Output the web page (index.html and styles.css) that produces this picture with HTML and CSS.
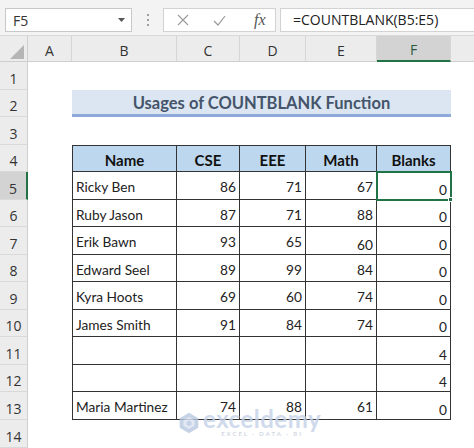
FILE: index.html
```html
<!DOCTYPE html>
<html>
<head>
<meta charset="utf-8">
<link rel="stylesheet" href="styles.css">
</head>
<body>
<div class="toolbar">
  <div class="namebox"><span>F5</span><svg class="caret" width="7" height="4" viewBox="0 0 7 4"><path d="M0 0h7L3.5 4z" fill="#555"/></svg></div>
  <div class="dots"><i></i><i></i><i></i></div>
  <div class="fxbox">
    <svg class="ic" width="12" height="12" viewBox="0 0 12 12"><path d="M1 1l10 10M11 1L1 11" stroke="#9a9a9a" stroke-width="1.1" fill="none"/></svg>
    <svg class="ic" width="13" height="11" viewBox="0 0 13 11"><path d="M1 6l4 4L12 1" stroke="#9a9a9a" stroke-width="1.2" fill="none"/></svg>
    <span class="fx">fx</span>
  </div>
  <div class="formula">=COUNTBLANK(B5:E5)</div>
</div>
<div class="sheet">
  <div class="corner"><svg width="14" height="14" viewBox="0 0 14 14"><path d="M14 0V14H0z" fill="#b5b5b5"/></svg></div>
  <div class="ch">A</div><div class="ch">B</div><div class="ch">C</div><div class="ch">D</div><div class="ch">E</div><div class="ch sel">F</div><div class="ch last"></div>

  <div class="rh">1</div><div class="c"></div><div class="c"></div><div class="c"></div><div class="c"></div><div class="c"></div><div class="c"></div><div class="c"></div>

  <div class="rh">2</div><div class="c"></div><div class="title">Usages of COUNTBLANK Function</div><div class="c"></div>

  <div class="rh">3</div><div class="c"></div><div class="c"></div><div class="c"></div><div class="c"></div><div class="c"></div><div class="c"></div><div class="c"></div>

  <div class="rh">4</div><div class="c"></div><div class="t th tl">Name</div><div class="t th">CSE</div><div class="t th">EEE</div><div class="t th">Math</div><div class="t th">Blanks</div><div class="c"></div>

  <div class="rh sel">5</div><div class="c"></div><div class="t tl txt">Ricky Ben</div><div class="t num">86</div><div class="t num">71</div><div class="t num">67</div><div class="t num bot active">0</div><div class="c"></div>

  <div class="rh">6</div><div class="c"></div><div class="t tl txt">Ruby Jason</div><div class="t num">87</div><div class="t num">71</div><div class="t num">88</div><div class="t num bot">0</div><div class="c"></div>

  <div class="rh">7</div><div class="c"></div><div class="t tl txt">Erik Bawn</div><div class="t num">93</div><div class="t num">65</div><div class="t num bot">60</div><div class="t num bot">0</div><div class="c"></div>

  <div class="rh">8</div><div class="c"></div><div class="t tl txt">Edward Seel</div><div class="t num">89</div><div class="t num">99</div><div class="t num">84</div><div class="t num bot">0</div><div class="c"></div>

  <div class="rh">9</div><div class="c"></div><div class="t tl txt">Kyra Hoots</div><div class="t num">69</div><div class="t num">60</div><div class="t num">74</div><div class="t num bot">0</div><div class="c"></div>

  <div class="rh">10</div><div class="c"></div><div class="t tl txt">James Smith</div><div class="t num">91</div><div class="t num">84</div><div class="t num">74</div><div class="t num bot">0</div><div class="c"></div>

  <div class="rh">11</div><div class="c"></div><div class="t tl txt"></div><div class="t num"></div><div class="t num"></div><div class="t num"></div><div class="t num bot">4</div><div class="c"></div>

  <div class="rh">12</div><div class="c"></div><div class="t tl txt"></div><div class="t num"></div><div class="t num"></div><div class="t num"></div><div class="t num bot">4</div><div class="c"></div>

  <div class="rh">13</div><div class="c"></div><div class="t tl txt">Maria Martinez</div><div class="t num">74</div><div class="t num">88</div><div class="t num">61</div><div class="t num bot">0</div><div class="c"></div>

  <div class="rh">14</div><div class="c"></div><div class="c"></div><div class="c"></div><div class="c"></div><div class="c"></div><div class="c"></div><div class="c"></div>

  <div class="watermark">
    <svg class="logo" width="22" height="22" viewBox="0 0 24 26">
      <path d="M12 1L23 7.5V18.5L12 25L1 18.5V7.5z" fill="#b9c9e2"/>
      <path d="M12 6L18.5 9.8V16.2L12 20L5.5 16.2V9.8z" fill="#dbe4f2"/>
      <path d="M12 10L15 11.8V15L12 16.8L9 15V11.8z" fill="#b9c9e2"/>
    </svg>
    <div class="wtext">
      <div class="wname">exceldemy</div>
      <div class="wsub">EXCEL · DATA · BI</div>
    </div>
  </div>
</div>
</body>
</html>
```

FILE: styles.css
```css
html, body {
  margin: 0;
  padding: 0;
  width: 474px;
  height: 448px;
  overflow: hidden;
  background: #ffffff;
}

.toolbar {
  height: 36px;
  box-sizing: border-box;
  background: #f3f3f3;
  border-bottom: 1px solid #dadada;
  display: flex;
  align-items: flex-start;
  padding-top: 8px;
  font-family: "Open Sans", "Noto Sans", sans-serif;
}

.namebox {
  margin-left: 5px;
  width: 127px;
  height: 24px;
  box-sizing: border-box;
  background: #fff;
  border: 1px solid #c8c8c8;
  display: flex;
  align-items: center;
  justify-content: space-between;
  padding: 0 6px 0 7px;
  font-size: 14px;
  color: #333;
}

.caret { display: block; }

.dots {
  width: 31px;
  height: 24px;
  display: flex;
  flex-direction: column;
  align-items: center;
  justify-content: center;
  gap: 3px;
}
.dots i {
  width: 2px;
  height: 2px;
  background: #a0a0a0;
  display: block;
}

.fxbox {
  width: 113px;
  height: 24px;
  box-sizing: border-box;
  background: #fff;
  border: 1px solid #d2d2d2;
  display: flex;
  align-items: center;
  padding-left: 13px;
}
.fxbox .ic { display: block; margin-right: 24px; }
.fx {
  font-family: "Liberation Serif", serif;
  font-style: italic;
  font-size: 16px;
  color: #555;
  margin-left: 4px;
}

.formula {
  margin-left: 4px;
  flex: 1;
  height: 24px;
  box-sizing: border-box;
  background: #fff;
  border: 1px solid #d2d2d2;
  border-right: none;
  padding-left: 12px;
  font-size: 14px;
  line-height: 22px;
  color: #222;
}

.sheet {
  position: relative;
  display: grid;
  grid-template-columns: 28px 44px 105px 63px 66px 71px 74px 1fr;
  grid-template-rows: 26px 28px 27px 28px 27px 28px 27px 28px 27px 28px 27px 28px 27px 28px 1fr;
  height: 412px;
  font-family: "Lato", "Liberation Sans", sans-serif;
  font-size: 13.7px;
  color: #222;
}

.corner {
  background: #ececec;
  border-right: 1px solid #cfcfcf;
  border-bottom: 1px solid #cfcfcf;
  box-sizing: border-box;
  display: flex;
  align-items: flex-end;
  justify-content: flex-end;
  padding: 0 3px 2px 0;
}
.corner svg { display: block; }

.ch {
  background: #ececec;
  border-right: 1px solid #d6d6d6;
  border-bottom: 1px solid #cfcfcf;
  box-sizing: border-box;
  display: flex;
  align-items: center;
  justify-content: center;
  padding-top: 3px;
  font-family: "Open Sans", "Noto Sans", sans-serif;
  font-size: 14px;
  color: #333;
}
.ch.sel {
  background: #d3d3d3;
  border-bottom: 2px solid #217346;
  color: #2a5a3f;
}
.ch.last { border-right: none; }

.rh {
  background: #ececec;
  border-right: 1px solid #cfcfcf;
  border-bottom: 1px solid #d9d9d9;
  box-sizing: border-box;
  display: flex;
  align-items: center;
  justify-content: center;
  padding-top: 5px;
  font-family: "Open Sans", "Noto Sans", sans-serif;
  font-size: 14px;
  color: #333;
}
.rh.sel {
  background: #d3d3d3;
  border-right: 2px solid #217346;
}

.c { background: #fff; }

.title {
  grid-column: span 5;
  background: #dce6f2;
  border-bottom: 3px solid #8eaadb;
  box-sizing: border-box;
  display: flex;
  align-items: center;
  justify-content: center;
  font-weight: 700;
  font-size: 16.5px;
  color: #44546a;
  padding-top: 2px;
}

.t {
  box-sizing: border-box;
  border-right: 1px solid #333;
  border-bottom: 1px solid #333;
  display: flex;
  align-items: center;
  padding: 2px 3px 0 3px;
  background: #fff;
}
.tl { border-left: 1px solid #333; }
.th {
  border-top: 1px solid #333;
  background: #bdd7ee;
  justify-content: center;
  font-weight: 700;
  font-size: 15px;
  color: #111;
}
.txt { justify-content: flex-start; }
.num { justify-content: flex-end; }
.bot { align-items: flex-end; padding-bottom: 1px; }

.active {
  position: relative;
  outline: 2px solid #217346;
  outline-offset: -1px;
}
.active::after {
  content: "";
  position: absolute;
  right: -3px;
  bottom: -3px;
  width: 5px;
  height: 5px;
  background: #217346;
  border: 1px solid #fff;
  box-sizing: border-box;
}

.watermark {
  position: absolute;
  left: 178px;
  top: 372px;
  display: flex;
  align-items: center;
  gap: 3px;
  opacity: 0.8;
  pointer-events: none;
}
.logo { display: block; }
.wtext { display: flex; flex-direction: column; align-items: center; }
.wname {
  font-family: "Lato", sans-serif;
  font-weight: 700;
  font-size: 24px;
  line-height: 22px;
  color: #c4d2e8;
  letter-spacing: 0.5px;
}
.wsub {
  font-family: "Lato", sans-serif;
  font-size: 6px;
  font-weight: 700;
  letter-spacing: 2px;
  color: #c8d0dc;
  line-height: 8px;
}
```
